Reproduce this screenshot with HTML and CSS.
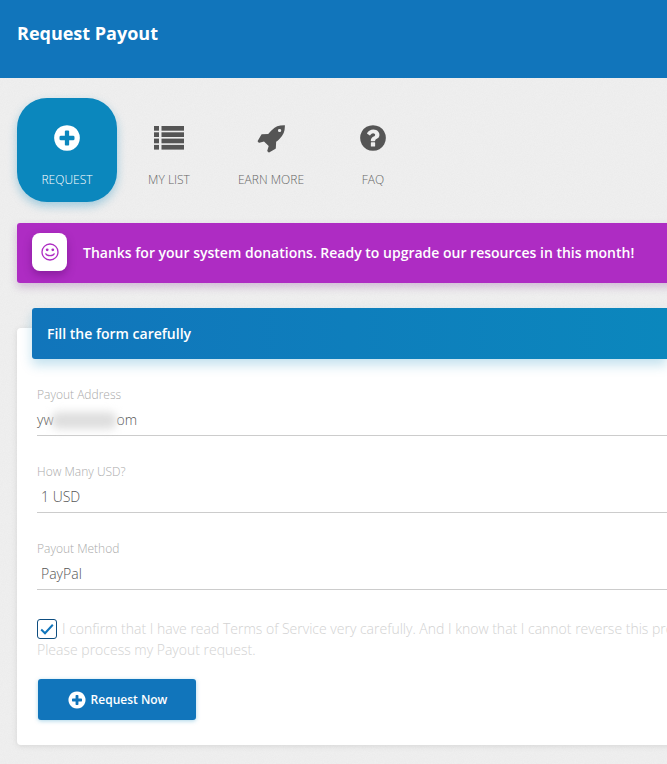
FILE: index.html
```html
<!DOCTYPE html>
<html lang="en">
<head>
<meta charset="utf-8">
<title>Request Payout</title>
<link rel="stylesheet" href="styles.css">
</head>
<body>
<header class="topbar"><h1 class="topbar-title">Request Payout</h1></header>
<main class="main">
  <nav class="tabs">
    <a class="tab tab-active">
      <svg class="tab-icon" viewBox="0 0 1792 1792"><path d="M1344 960v-128q0-26-19-45t-45-19h-256v-256q0-26-19-45t-45-19h-128q-26 0-45 19t-19 45v256h-256q-26 0-45 19t-19 45v128q0 26 19 45t45 19h256v256q0 26 19 45t45 19h128q26 0 45-19t19-45v-256h256q26 0 45-19t19-45zm320-64q0 209-103 385.500t-279.500 279.500-385.500 103-385.500-103-279.500-279.500-103-385.500 103-385.500 279.500-279.500 385.500-103 385.500 103 279.500 279.500 103 385.500z"/></svg>
      <span class="tab-label">REQUEST</span>
    </a>
    <a class="tab">
      <svg class="tab-icon" viewBox="0 0 30 30"><rect y="3" width="5" height="4.700"/><rect x="7.500" y="3" width="22.500" height="4.700"/><rect y="9.300" width="5" height="4.700"/><rect x="7.500" y="9.300" width="22.500" height="4.700"/><rect y="15.600" width="5" height="4.700"/><rect x="7.500" y="15.600" width="22.500" height="4.700"/><rect y="21.900" width="5" height="4.700"/><rect x="7.500" y="21.900" width="22.500" height="4.700"/></svg>
      <span class="tab-label">MY LIST</span>
    </a>
    <a class="tab">
      <svg class="tab-icon" viewBox="0 0 1792 1792"><path d="M1504 448q0-40-28-68t-68-28-68 28-28 68 28 68 68 28 68-28 28-68zm224-288q0 249-75.500 430.500t-253.500 360.500q-81 80-195 176l-20 379q-2 16-16 26l-384 224q-7 4-16 4-12 0-23-9l-64-64q-13-14-8-32l85-276-281-281-276 85q-3 1-9 1-14 0-23-9l-64-64q-17-19-5-39l224-384q10-14 26-16l379-20q96-114 176-195 188-187 358-258t431-71q14 0 24 9.500t10 22.500z"/></svg>
      <span class="tab-label">EARN MORE</span>
    </a>
    <a class="tab">
      <svg class="tab-icon" viewBox="0 0 1792 1792"><path d="M1024 1376v-192q0-14-9-23t-23-9h-192q-14 0-23 9t-9 23v192q0 14 9 23t23 9h192q14 0 23-9t9-23zm256-672q0-88-55.500-163t-138.500-116-170-41q-243 0-371 213-15 24 8 42l132 100q7 6 19 6 16 0 25-12 53-68 86-92 34-24 86-24 48 0 85.500 26t37.500 59q0 38-20 61t-68 45q-63 28-115.500 86.500t-52.500 125.500v36q0 14 9 23t23 9h192q14 0 23-9t9-23q0-19 21.500-49.500t54.500-49.500q32-18 49-28.500t46-35 44.500-48 28-60.500 12.500-81zm384 192q0 209-103 385.500t-279.500 279.500-385.500 103-385.500-103-279.500-279.500-103-385.500 103-385.500 279.500-279.500 385.500-103 385.500 103 279.500 279.500 103 385.500z"/></svg>
      <span class="tab-label">FAQ</span>
    </a>
  </nav>

  <section class="notice">
    <div class="notice-icon">
      <svg class="smile" viewBox="0 0 18 18"><circle cx="9" cy="9" r="8" fill="none" stroke="currentColor" stroke-width="1.300"/><circle cx="6.200" cy="6.800" r="1.400" fill="currentColor"/><circle cx="11.800" cy="6.800" r="1.400" fill="currentColor"/><path d="M4.800 10.800c1 2.500 7.400 2.500 8.400 0" fill="none" stroke="currentColor" stroke-width="1.300" stroke-linecap="round"/></svg>
    </div>
    <p class="notice-text">Thanks for your system donations. Ready to upgrade our resources in this month!</p>
  </section>

  <section class="card">
    <h2 class="card-head">Fill the form carefully</h2>
    <form class="form">
      <div class="fields">
        <div class="field">
          <div class="field-label">Payout Address</div>
          <div class="field-value field-value-address">yw<span class="redact"></span>om</div>
        </div>
        <div class="field">
          <div class="field-label">How Many USD?</div>
          <div class="field-value">1 USD</div>
        </div>
        <div class="field">
          <div class="field-label">Payout Method</div>
          <div class="field-value">PayPal</div>
        </div>
      </div>
      <div class="confirm">
        <span class="checkbox"><svg class="check" viewBox="0 0 14 12"><path d="M1.200 6.500l3.800 3.700 7.800-8.400" fill="none" stroke="currentColor" stroke-width="2"/></svg></span>I confirm that I have read Terms of Service very carefully. And I know that I cannot reverse this process.<br>Please process my Payout request.
      </div>
      <button class="submit" type="button">
        <svg class="submit-icon" viewBox="0 0 1792 1792"><path d="M1344 960v-128q0-26-19-45t-45-19h-256v-256q0-26-19-45t-45-19h-128q-26 0-45 19t-19 45v256h-256q-26 0-45 19t-19 45v128q0 26 19 45t45 19h256v256q0 26 19 45t45 19h128q26 0 45-19t19-45v-256h256q26 0 45-19t19-45zm320-64q0 209-103 385.500t-279.500 279.500-385.500 103-385.500-103-279.500-279.500-103-385.500 103-385.500 279.500-279.500 385.500-103 385.500 103 279.500 279.500 103 385.500z"/></svg>
        Request Now
      </button>
    </form>
  </section>
</main>
</body>
</html>
```
FILE: styles.css
```css
* { box-sizing: border-box; }
html, body { margin: 0; padding: 0; height: 100%; overflow: hidden; }
body {
  font-family: "Open Sans", "Noto Sans", sans-serif;
  background-color: #efefef;
  background-image: url("data:image/svg+xml,%3Csvg xmlns='http://www.w3.org/2000/svg' width='200' height='200'%3E%3Cfilter id='n'%3E%3CfeTurbulence type='fractalNoise' baseFrequency='0.9' numOctaves='2' stitchTiles='stitch'/%3E%3CfeColorMatrix values='0 0 0 0 0.75 0 0 0 0 0.75 0 0 0 0 0.75 0.4 0 0 0 -0.1'/%3E%3C/filter%3E%3Crect width='200' height='200' filter='url(%23n)'/%3E%3C/svg%3E");
}
.topbar { height: 78px; background: #1175bb; padding: 22px 17px 0; }
.topbar-title { margin: 0; color: #fff; font-size: 18px; line-height: 23px; font-weight: 700; }

.main { padding: 20px 0 0 17px; width: 1000px; }

.tabs { display: flex; gap: 2px; }
.tab {
  width: 100px; height: 104px; border-radius: 30px;
  display: flex; flex-direction: column; align-items: center;
  padding-top: 25px; color: #555;
}
.tab-active { background: #0b87bd; color: #fff; box-shadow: 0 4px 10px rgba(11, 135, 189, .35); }
.tab-icon { width: 30px; height: 30px; fill: currentColor; display: block; }
.tab-label { margin-top: 18px; font-size: 12px; line-height: 17px; font-weight: 300; color: #666; }
.tab-active .tab-label { color: #fff; }

.notice {
  margin-top: 21px; height: 60px; background: #ae2cc3; border-radius: 3px;
  display: flex; align-items: center; padding-left: 15px; gap: 16px;
  box-shadow: 0 4px 8px rgba(120, 40, 140, .25);
}
.notice-icon {
  width: 35px; height: 38px; background: #fff; border-radius: 8px; color: #ae2cc3;
  display: flex; align-items: center; justify-content: center; margin-bottom: 2px;
  box-shadow: 0 4px 8px rgba(70, 0, 90, .35);
}
.smile { width: 18px; height: 18px; display: block; }
.notice-text { margin: 0; color: #fff; font-size: 14px; line-height: 20px; font-weight: 600; white-space: nowrap; }

.card {
  margin-top: 45px; height: 417px; background: #fff; border-radius: 4px;
  box-shadow: 0 1px 6px rgba(0, 0, 0, .1);
}
.card-head {
  position: relative; top: -20px; margin: 0 0 0 15px; height: 51px; width: 635px;
  padding-left: 15px; border-radius: 3px 0 0 3px;
  background: linear-gradient(90deg, #1175bb, #0b87bd);
  color: #fff; font-size: 14px; line-height: 51px; font-weight: 600;
  box-shadow: 0 6px 12px rgba(11, 135, 189, .25);
}
.form { padding: 8px 0 0 20px; }
.fields { display: flex; flex-direction: column; gap: 28px; }
.field { height: 49px; }
.field-label { font-size: 12px; line-height: 16px; font-weight: 300; color: #aaa; }
.field-value {
  margin-top: 2px; height: 31px; padding: 5px 0 0 4px; border-bottom: 1px solid #ccc;
  font-size: 14px; line-height: 20px; font-weight: 300; color: #555; width: 900px;
}
.field-value-address { padding-left: 0; display: flex; }
.redact {
  width: 66px; height: 17px; margin: 2px 0 0 -3px; background: #dedede;
  filter: blur(4px); border-radius: 8px;
}
.confirm {
  margin-top: 28px; font-size: 14px; line-height: 21px; font-weight: 300; color: #d2d2d2;
  white-space: nowrap;
}
.checkbox {
  display: inline-flex; align-items: center; justify-content: center;
  width: 20px; height: 20px; margin: -4px 5px -4px 0; vertical-align: -1px;
  border: 1.500px solid #0d4d80; border-radius: 3px; background: #fff; color: #1175bb;
}
.check { width: 14px; height: 12px; display: block; }
.submit {
  display: flex; align-items: center; justify-content: center; gap: 4px;
  width: 158px; height: 41px; margin: 19px 0 0 1px; padding: 0;
  background: #1175bb; border: 0; border-radius: 3px; color: #fff;
  font-family: inherit; font-size: 12px; font-weight: 600;
  box-shadow: 0 1px 4px rgba(11, 135, 189, .35);
}
.submit-icon { width: 20px; height: 20px; fill: currentColor; display: block; }
```
